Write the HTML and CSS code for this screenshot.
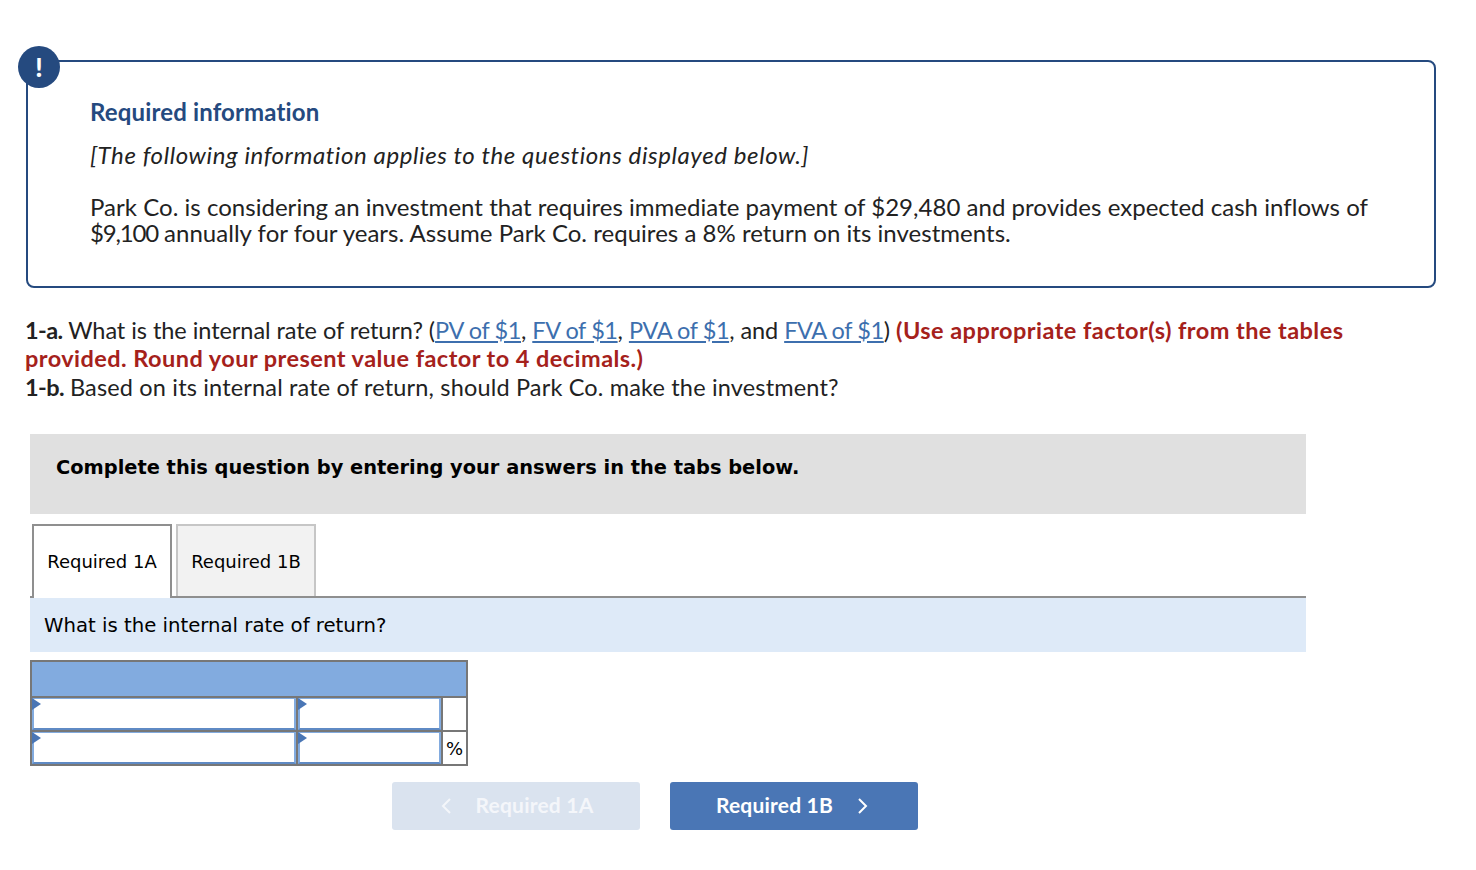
FILE: index.html
```html
<!DOCTYPE html>
<html>
<head>
    <title>Required information</title>
    <link rel="stylesheet" href="styles.css">
</head>
    <body>
        <div class="info-box">
            <div class="info-icon">!</div>
            <h2>Required information</h2>
            <p class="info-note">[The following information applies to the questions displayed below.]</p>
            <p class="info-text">Park Co. is considering an investment that requires immediate payment of $29,480 and provides expected cash inflows of <span class="tight">$9,100</span> annually for four years. Assume Park Co. requires a 8% return on its investments.</p>
        </div>

        <div class="question">
            <b class="part">1-a.</b> What is the internal rate of return? (<a href="#">PV of $1</a>, <a href="#">FV of $1</a>, <a href="#">PVA of $1</a>, and <a href="#">FVA of $1</a>) <b class="warn">(Use appropriate factor(s) from the tables provided. Round your present value factor to 4 decimals.)</b><br>
            <b class="part">1-b.</b> <span class="part-b">Based on its internal rate of return, should Park Co. make the investment?</span>
        </div>

        <div class="banner">Complete this question by entering your answers in the tabs below.</div>

        <div class="tabs">
            <div class="tab active">Required 1A</div>
            <div class="tab">Required 1B</div>
        </div>
        <div class="tab-prompt">What is the internal rate of return?</div>

        <table class="answers">
            <colgroup>
                <col class="name-col">
                <col class="value-col">
                <col>
            </colgroup>
            <tr class="head"><td colspan="3"></td></tr>
            <tr>
                <td class="input-cell"><div class="input-box"></div></td>
                <td class="input-cell"><div class="input-box"></div></td>
                <td class="unit-cell"></td>
            </tr>
            <tr>
                <td class="input-cell"><div class="input-box"></div></td>
                <td class="input-cell"><div class="input-box"></div></td>
                <td class="unit-cell">%</td>
            </tr>
        </table>

        <div class="nav">
            <button type="button" class="nav-btn prev">
                <svg class="chev" width="11" height="18" viewBox="0 0 11 18"><path d="M9 2L2 9l7 7" fill="none" stroke="currentColor" stroke-width="2"/></svg>
                <span>Required 1A</span>
            </button>
            <button type="button" class="nav-btn next">
                <span>Required 1B</span>
                <svg class="chev" width="11" height="18" viewBox="0 0 11 18"><path d="M2 2l7 7-7 7" fill="none" stroke="currentColor" stroke-width="2"/></svg>
            </button>
        </div>
    </body>
</html>
```

FILE: styles.css
```css
body {
    margin: 0;
    padding: 60px 40px 0 26px;
    color: #222;
    background-color: #fff;
    font-family: Lato, "Open Sans", sans-serif;
    font-variant-ligatures: none;
}
.info-box {
    position: relative;
    height: 228px;
    box-sizing: border-box;
    padding: 36px 62px 0;
    border: 2px solid #254a7f;
    border-radius: 8px;
}
.info-icon {
    position: absolute;
    left: -10px;
    top: -16px;
    width: 42px;
    height: 42px;
    border-radius: 50%;
    background-color: #254a7f;
    color: #fff;
    font-size: 26px;
    font-weight: 900;
    line-height: 42px;
    text-align: center;
}
h2 {
    margin: 0;
    font-size: 24px;
    line-height: 28px;
    font-weight: 700;
    letter-spacing: .15px;
    color: #254a7f;
}
.info-note {
    margin: 16px 0 0;
    font-size: 24px;
    line-height: 26px;
    font-style: italic;
    letter-spacing: .6px;
}
.info-text {
    margin: 26px 0 0;
    font-size: 24px;
    line-height: 26px;
    letter-spacing: .03px;
}
.tight {
    letter-spacing: -1.2px;
}
.question {
    margin: 28px 0 0 -1px;
    width: 1340px;
    height: 84px;
    font-size: 23.5px;
    line-height: 28.3px;
    letter-spacing: -.05px;
}
.question a {
    color: #3d6fae;
    text-decoration: underline;
    letter-spacing: -.4px;
}
.part {
    letter-spacing: -.6px;
}
.part-b {
    letter-spacing: .17px;
}
.warn {
    color: #a5211b;
    letter-spacing: .45px;
}
.banner {
    margin: 34px 0 0 4px;
    width: 1276px;
    height: 80px;
    box-sizing: border-box;
    padding: 22px 26px;
    background-color: #e0e0e0;
    color: #000;
    font-family: "DejaVu Sans", sans-serif;
    font-size: 19.4px;
    line-height: 24px;
    font-weight: 700;
}
.tabs {
    display: flex;
    gap: 4px;
    margin: 10px 0 0 4px;
    padding-left: 2px;
    width: 1274px;
    height: 72px;
    border-bottom: 2px solid #8f8f8f;
}
.tab {
    width: 140px;
    height: 72px;
    box-sizing: border-box;
    border: 2px solid #c6c6c6;
    border-bottom: 0;
    background-color: #f2f2f2;
    color: #000;
    font-family: "DejaVu Sans", sans-serif;
    font-size: 18px;
    line-height: 72px;
    text-align: center;
}
.tab.active {
    height: 74px;
    border-color: #8f8f8f;
    background-color: #fff;
    margin-bottom: -2px;
}
.tab-prompt {
    margin-left: 4px;
    width: 1276px;
    height: 54px;
    box-sizing: border-box;
    padding-left: 14px;
    background-color: #deeaf8;
    color: #000;
    font-family: "DejaVu Sans", sans-serif;
    font-size: 19.7px;
    line-height: 56px;
}
.answers {
    margin: 8px 0 0 4px;
    width: 438px;
    height: 106px;
    table-layout: fixed;
    border-collapse: collapse;
    border: 2px solid #777;
}
.answers td {
    padding: 0;
    border: 2px solid #777;
}
.head td {
    height: 34px;
    background-color: #82abdf;
}
.name-col {
    width: 266px;
}
.value-col {
    width: 145px;
}
.input-cell {
    position: relative;
    height: 32px;
}
.input-box {
    height: 32px;
    box-sizing: border-box;
    border: 2px solid #82abdf;
    border-top-width: 1px;
    border-bottom-color: #5f8ac4;
}
.input-cell::before {
    content: "";
    position: absolute;
    left: 0;
    top: 0;
    border-left: 9px solid #4a76b5;
    border-top: 6px solid transparent;
    border-bottom: 6px solid transparent;
}
.unit-cell {
    padding-bottom: 2px;
    color: #000;
    font-family: "DejaVu Sans", sans-serif;
    font-size: 18px;
    text-align: center;
}
.nav {
    display: flex;
    gap: 30px;
    margin: 16px 0 0 366px;
}
.nav-btn {
    display: flex;
    align-items: center;
    justify-content: center;
    gap: 24px;
    width: 248px;
    height: 48px;
    padding: 0;
    border: 0;
    border-radius: 3px;
    background-color: #4a76b5;
    color: #fff;
    font-family: Lato, "Open Sans", sans-serif;
    font-size: 21px;
    font-weight: 700;
    letter-spacing: .2px;
}
.nav-btn span {
    margin-top: -4px;
}
.nav-btn.prev {
    background-color: #dae3ef;
    color: #f4f6fa;
}
.prev .chev {
    margin-left: 2px;
}
.next .chev {
    margin-right: 4px;
}
```
